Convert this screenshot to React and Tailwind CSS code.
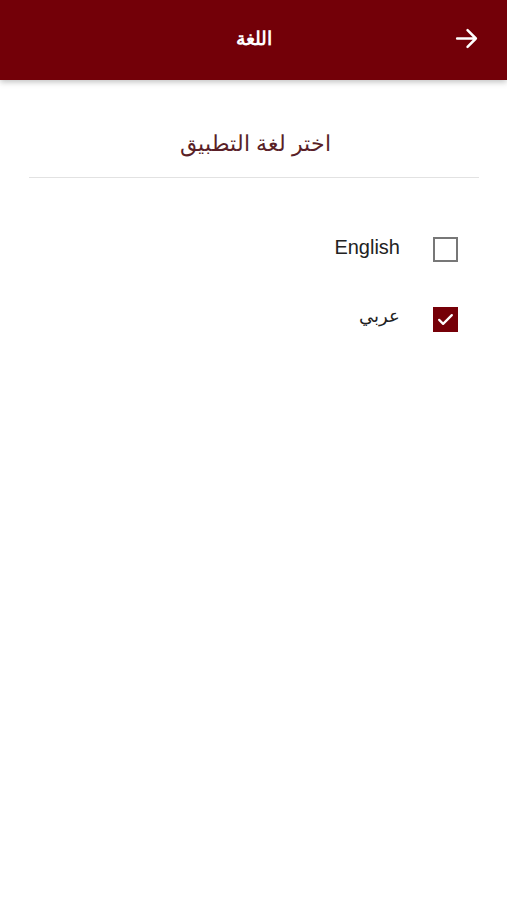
import React, { useState } from 'react';

const font = { fontFamily: '"Noto Sans", "Liberation Sans", sans-serif' };

function Checkbox({ checked }) {
    if (checked) {
        return (
            <div className="w-[25px] h-[25px] bg-[#760008] flex items-center justify-center">
                <svg width="19" height="19" viewBox="0 0 24 24" fill="none" stroke="white" strokeWidth="2.8" strokeLinecap="round" strokeLinejoin="round">
                    <path d="M4 12.5l5 5L20 6.5" />
                </svg>
            </div>
        );
    }
    return <div className="w-[25px] h-[25px] border-2 border-[#777777] bg-white" />;
}

export default function App() {
    const [lang, setLang] = useState('ar');

    return (
        <div className="w-[507px] h-[900px] bg-white overflow-hidden" style={font}>
            <header className="relative h-[80px] bg-[#730008] flex items-center justify-center shadow-[0_2px_6px_rgba(0,0,0,0.25)]">
                <h1 className="text-white text-[19px] font-bold mt-[-4px]">اللغة</h1>
                <button className="absolute right-[28px] top-[26px] text-white">
                    <svg width="25" height="25" viewBox="0 0 24 24" fill="none" stroke="white" strokeWidth="2.4" strokeLinecap="round" strokeLinejoin="round">
                        <path d="M3 12h18M13 4l8 8-8 8" />
                    </svg>
                </button>
            </header>

            <div className="px-[29px] pt-[44px]">
                <h2 className="text-center text-[22px] text-[#5a1f27] leading-[36px] pl-[4px]">اختر لغة التطبيق</h2>
                <div className="mt-[17px] h-px bg-[#e2e2e2] mr-[-1px]" />
            </div>

            <div className="flex flex-col items-end pr-[49px] pt-[59px] gap-[45px]">
                <button className="flex items-center gap-[33px]" onClick={() => setLang('en')}>
                    <span className="text-[20px] text-[#222] mt-[-6px]" style={{ fontFamily: '"Liberation Sans", sans-serif' }}>English</span>
                    <Checkbox checked={lang === 'en'} />
                </button>
                <button className="flex items-center gap-[33px]" onClick={() => setLang('ar')}>
                    <span className="text-[18px] text-[#222] mt-[-8px]">عربي</span>
                    <Checkbox checked={lang === 'ar'} />
                </button>
            </div>
        </div>
    );
}
